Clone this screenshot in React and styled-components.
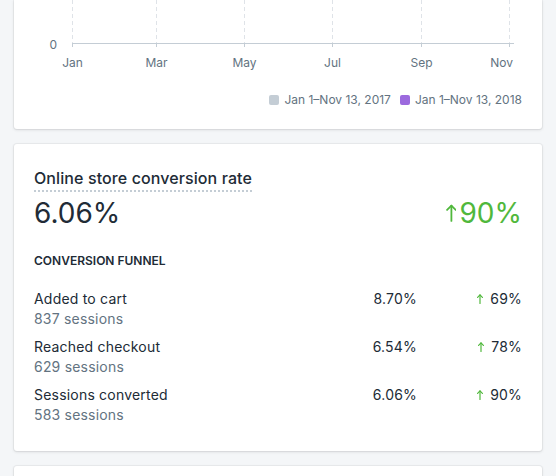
import styled, { createGlobalStyle } from "styled-components";

const GlobalStyle = createGlobalStyle`
  html, body {
    margin: 0;
    padding: 0;
    background: #f4f6f8;
    font-family: Inter, "Noto Sans", "Liberation Sans", sans-serif;
    color: #212b36;
    -webkit-font-smoothing: antialiased;
  }
`;

const months = [
  { label: "Jan", x: 58 },
  { label: "Mar", x: 142 },
  { label: "May", x: 230 },
  { label: "Jul", x: 318 },
  { label: "Sep", x: 407 },
  { label: "Nov", x: 495, end: true },
];

const funnel = [
  { name: "Added to cart", sessions: "837 sessions", rate: "8.70%", change: "69%" },
  { name: "Reached checkout", sessions: "629 sessions", rate: "6.54%", change: "78%" },
  { name: "Sessions converted", sessions: "583 sessions", rate: "6.06%", change: "90%" },
];

function UpArrow({ size, weight = 1.2 }) {
  const h = size;
  const w = size * 0.6;
  return (
    <svg width={w} height={h} viewBox="0 0 6 10" fill="none" stroke="#50b83c" strokeWidth={weight} strokeLinecap="round" strokeLinejoin="round">
      <path d="M3 9.4V0.9" />
      <path d="M0.6 3.3L3 0.9L5.4 3.3" />
    </svg>
  );
}

function SalesChart() {
  return (
    <ChartSvg width="528" height="76">
      {months.map((m) => (
        <line key={m.label} x1={m.x + 0.5} y1="0" x2={m.x + 0.5} y2="47" stroke="#dfe3e8" strokeDasharray="4 3" />
      ))}
      <line x1="58" y1="43.5" x2="500" y2="43.5" stroke="#c4cdd5" />
      {months.map((m) => (
        <line key={m.label + "t"} x1={m.x + 0.5} y1="43" x2={m.x + 0.5} y2="47" stroke="#c4cdd5" />
      ))}
      <text x="43" y="49" textAnchor="end" fontSize="12" fill="#637381">0</text>
      {months.map((m) => (
        <text
          key={m.label + "l"}
          x={m.end ? 499 : m.x + 0.5}
          y="67"
          textAnchor={m.end ? "end" : "middle"}
          fontSize="12"
          fill="#637381"
        >
          {m.label}
        </text>
      ))}
    </ChartSvg>
  );
}

export default function App() {
  return (
    <>
      <GlobalStyle />
      <Page>
        <Card $flatTop>
          <SalesChart />
          <Legend>
            <LegendItem>
              <Swatch $color="#c4cdd5" />
              Jan 1–Nov 13, 2017
            </LegendItem>
            <LegendItem>
              <Swatch $color="#9c6ade" />
              Jan 1–Nov 13, 2018
            </LegendItem>
          </Legend>
        </Card>

        <Card>
          <Section>
            <Title>Online store conversion rate</Title>
            <Headline>
              <BigValue>6.06%</BigValue>
              <BigChange>
                <UpArrow size={18} weight={1} />
                90%
              </BigChange>
            </Headline>
            <Subheading>Conversion funnel</Subheading>
            <Funnel>
              {funnel.map((row) => (
                <FunnelRow key={row.name}>
                  <div>
                    <StepName>{row.name}</StepName>
                    <Sessions>{row.sessions}</Sessions>
                  </div>
                  <Rate>{row.rate}</Rate>
                  <Change>
                    <UpArrow size={10} />
                    {row.change}
                  </Change>
                </FunnelRow>
              ))}
            </Funnel>
          </Section>
        </Card>

        <Card $stub />
      </Page>
    </>
  );
}

const Page = styled.div`
  display: flex;
  flex-direction: column;
  gap: 15px;
  padding: 0 14px;
`;

const Card = styled.div`
  background: #fff;
  border-radius: ${(p) => (p.$flatTop ? "0 0 3px 3px" : "3px")};
  box-shadow: 0 0 0 1px rgba(63, 63, 68, 0.05), 0 1px 3px 0 rgba(63, 63, 68, 0.15);
  padding-bottom: ${(p) => (p.$flatTop ? "21px" : "0")};
  min-height: ${(p) => (p.$stub ? "60px" : "0")};
`;

const ChartSvg = styled.svg`
  display: block;
  font-family: Inter, "Noto Sans", "Liberation Sans", sans-serif;
`;

const Legend = styled.div`
  display: flex;
  justify-content: flex-end;
  gap: 9px;
  margin-top: 16px;
  padding-right: 20px;
  font-size: 12px;
  line-height: 16px;
  color: #637381;
`;

const LegendItem = styled.div`
  display: flex;
  align-items: center;
  gap: 5px;
`;

const Swatch = styled.span`
  width: 10px;
  height: 10px;
  border-radius: 2px;
  background: ${(p) => p.$color};
`;

const Section = styled.div`
  padding: 22px 20px 26px;
`;

const Title = styled.span`
  display: inline-block;
  font-size: 16px;
  line-height: 24px;
  font-weight: 500;
  letter-spacing: 0.1px;
  border-bottom: 2px dotted #c4cdd5;
`;

const Headline = styled.div`
  display: flex;
  justify-content: space-between;
  align-items: center;
  margin-top: 5px;
  line-height: 32px;
`;

const BigValue = styled.div`
  font-size: 28px;
`;

const BigChange = styled.div`
  display: flex;
  align-items: center;
  gap: 3px;
  font-size: 28px;
  color: #50b83c;
`;

const Subheading = styled.h3`
  margin: 24px 0 0;
  font-size: 12px;
  line-height: 16px;
  font-weight: 600;
  text-transform: uppercase;
`;

const Funnel = styled.div`
  display: flex;
  flex-direction: column;
  gap: 8px;
  margin-top: 20px;
`;

const FunnelRow = styled.div`
  display: grid;
  grid-template-columns: 1fr 80px 105px;
  font-size: 14px;
  line-height: 20px;
  letter-spacing: 0.2px;
`;

const StepName = styled.div`
  color: #212b36;
`;

const Sessions = styled.div`
  color: #637381;
`;

const Rate = styled.div`
  text-align: right;
`;

const Change = styled.div`
  display: flex;
  justify-content: flex-end;
  align-items: center;
  gap: 7px;
  height: 20px;
`;
